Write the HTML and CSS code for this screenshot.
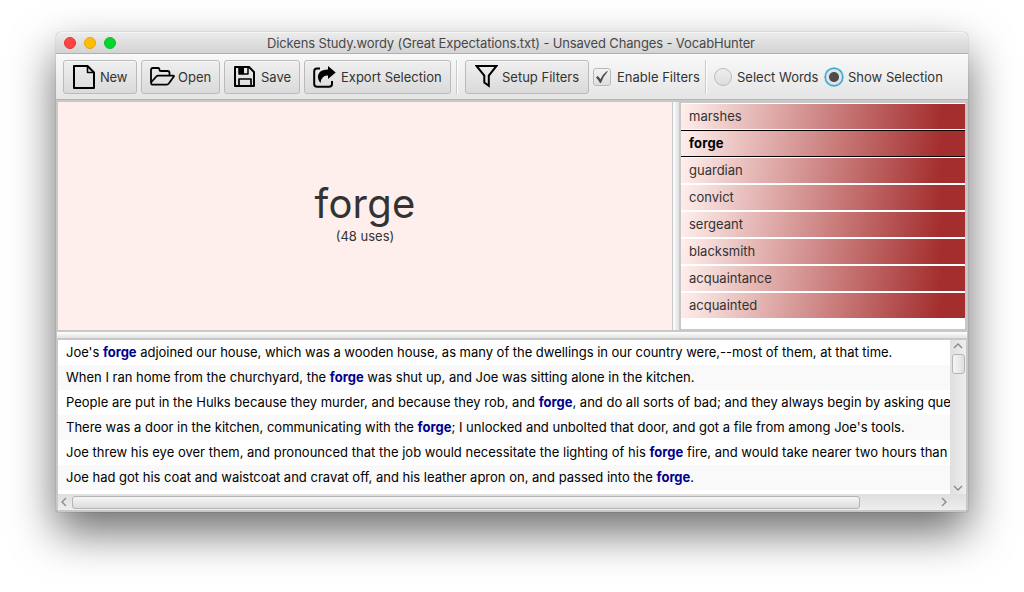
FILE: index.html
```html
<!DOCTYPE html>
<html lang="en">
<head>
<meta charset="utf-8">
<title>VocabHunter</title>
<link rel="stylesheet" href="styles.css">
</head>
<body>
<main class="window">
  <header class="titlebar">
    <div class="lights"><i class="light red"></i><i class="light amber"></i><i class="light green"></i></div>
    <h1 class="title">Dickens Study.wordy (Great Expectations.txt) - Unsaved Changes - VocabHunter</h1>
  </header>
  <nav class="toolbar">
    <button class="btn new"><svg class="icon" width="22" height="24" viewBox="0 0 22 24" fill="none" stroke="#000" stroke-width="2" stroke-linejoin="round"><path d="M1 1H14.5L21 7.5V23H1Z"/><path d="M14.5 1V7.5H21" stroke-width="1.6"/></svg><span class="label">New</span></button>
    <button class="btn open"><svg class="icon" width="25" height="19" viewBox="0 0 25 19" fill="none" stroke="#000" stroke-width="1.8" stroke-linejoin="round"><path d="M1 15.500V3Q1 1 3 1H8Q9.500 1 9.500 3Q9.500 4 11 4H17.500Q19.500 4 19.500 6V8.500"/><path d="M1 15.500L6.300 9.500Q7 8.600 8.500 8.600H23Q24.500 8.600 23.700 9.800L18.800 16.500Q17.800 17.700 16 17.700H2.500Q1 17.500 1 15.500Z"/></svg><span class="label">Open</span></button>
    <button class="btn save"><svg class="icon" width="21" height="21" viewBox="0 0 21 21" fill="none" stroke="#000" stroke-width="2" stroke-linejoin="round"><path d="M1 1H15L20 6V20H1Z"/><path d="M5 20V13H17V20" stroke-width="1.7"/><path d="M5 1V8H14V1" stroke-width="1.5"/><path d="M5 1H10V8H5Z" fill="#000" stroke="none"/></svg><span class="label">Save</span></button>
    <button class="btn export"><svg class="icon" width="23" height="22" viewBox="0 0 23 22"><path d="M7 2.500H4Q1.200 2.500 1.200 5.500V18Q1.200 20.800 4 20.800H16Q19 20.800 19 18V15" fill="none" stroke="#000" stroke-width="2"/><path d="M15 0L22.700 6.500L15 13V9.500Q8.500 9 7.500 17Q4.500 13.500 5 9.500Q6 3.500 15 3.500Z"/></svg><span class="label">Export Selection</span></button>
    <i class="sep sep-a"></i>
    <button class="btn setup"><svg class="icon" width="23" height="23" viewBox="0 0 23 23" fill="none" stroke="#000" stroke-width="2"><path d="M1.500 1H21.500L13.800 10.500V20.700L9.300 17.500V10.500Z"/></svg><span class="label">Setup Filters</span></button>
    <span class="check"><svg width="12" height="12" viewBox="0 0 12 12"><path d="M0 6.500L1.800 5L4.500 8.200Q7 3 11 0L11.800 .6Q7.500 5 5 12H4Q2.500 9 0 6.500Z" fill="#4a4a4a"/></svg></span>
    <span class="label enable">Enable Filters</span>
    <i class="sep sep-b"></i>
    <i class="radio"></i><span class="label words">Select Words</span>
    <i class="radio on"></i><span class="label show">Show Selection</span>
  </nav>
  <section class="upper">
    <div class="detail"><div class="word">forge</div><div class="uses">(48 uses)</div></div>
    <div class="vsplit"></div>
    <ul class="words-list">
      <li class="item">marshes</li>
      <li class="item current">forge</li>
      <li class="item">guardian</li>
      <li class="item">convict</li>
      <li class="item">sergeant</li>
      <li class="item">blacksmith</li>
      <li class="item">acquaintance</li>
      <li class="item">acquainted</li>
    </ul>
  </section>
  <div class="hsplit"></div>
  <section class="lower">
    <div class="lines">
      <p class="line l1">Joe's <b>forge</b> adjoined our house, which was a wooden house, as many of the dwellings in our country were,--most of them, at that time.</p>
      <p class="line">When I ran home from the churchyard, the <b>forge</b> was shut up, and Joe was sitting alone in the kitchen.</p>
      <p class="line l3">People are put in the Hulks because they murder, and because they rob, and <b>forge</b>, and do all sorts of bad; and they always begin by asking que</p>
      <p class="line">There was a door in the kitchen, communicating with the <b>forge</b>; I unlocked and unbolted that door, and got a file from among Joe's tools.</p>
      <p class="line l5">Joe threw his eye over them, and pronounced that the job would necessitate the lighting of his <b>forge</b> fire, and would take nearer two hours than</p>
      <p class="line">Joe had got his coat and waistcoat and cravat off, and his leather apron on, and passed into the <b>forge</b>.</p>
    </div>
    <div class="vbar">
      <svg width="10" height="6" viewBox="0 0 10 6"><path d="M1 5L5 1L9 5"/></svg>
      <i class="vthumb"></i>
      <svg class="down" width="10" height="6" viewBox="0 0 10 6"><path d="M1 1L5 5L9 1"/></svg>
    </div>
    <div class="hbar">
      <svg width="6" height="10" viewBox="0 0 6 10"><path d="M5 1L1 5L5 9"/></svg>
      <i class="hthumb"></i>
      <svg class="right" width="6" height="10" viewBox="0 0 6 10"><path d="M1 1L5 5L1 9"/></svg>
    </div>
  </section>
</main>
</body>
</html>
```
FILE: styles.css
```css
* { box-sizing: border-box; }
body { margin: 0; width: 1024px; height: 592px; overflow: hidden; background: #fff; padding: 32px 56px; font-family: Inter, "Liberation Sans", sans-serif; font-size: 13px; color: #333; }
.window { width: 912px; height: 480px; display: flex; flex-direction: column; background: #c8c8c8; border-radius: 5px 5px 2px 2px; box-shadow: 0 0 1px rgba(0,0,0,.5), 0 20px 45px rgba(0,0,0,.58); }
.titlebar { height: 22px; flex: none; display: grid; grid-template-columns: 211px 1fr; align-items: center; background: linear-gradient(#ebebeb, #d3d3d3); border-bottom: 1px solid #b0b0b0; border-top: 1px solid #f5f5f5; border-radius: 5px 5px 0 0; }
.lights { display: flex; gap: 8px; padding-left: 8px; }
.light { width: 12px; height: 12px; border-radius: 50%; }
.red { background: #ff4543; border: 1px solid #e9302f; }
.amber { background: #ffbe00; border: 1px solid #e3a51b; }
.green { background: #00d62b; border: 1px solid #0fbd30; }
.title { margin: 0; font-size: 13px; font-weight: 400; letter-spacing: -0.135px; color: #484848; white-space: nowrap; line-height: 16px; }
.toolbar { height: 46px; flex: none; display: flex; align-items: center; padding: 0 7px; background: linear-gradient(#f9f9f9, #e5e5e5); border-bottom: 1px solid #b4b4b4; }
.btn { height: 34px; flex: none; display: flex; align-items: center; margin: 0 4px 0 0; padding: 0 0 0 9px; border: 1px solid #bababa; border-radius: 3px; background: linear-gradient(#efefef, #dadada); box-shadow: inset 0 1px #f9f9f9; font: inherit; color: #333; }
.icon { flex: none; }
.label { flex: none; white-space: nowrap; line-height: 16px; }
.new { width: 74px; padding-left: 8.500px; } .new .label { margin-left: 5.500px; letter-spacing: -0.2px; }
.open { width: 79px; padding-left: 8px; } .open .label { margin-left: 3px; }
.save { width: 76px; } .save .label { margin-left: 6px; }
.export { width: 147px; padding-left: 8px; } .export .label { margin-left: 5px; }
.setup { width: 124px; } .setup .label { margin-left: 4px; }
.sep { flex: none; width: 2px; height: 34px; border-left: 1px solid #c9c9c9; border-right: 1px solid #fff; }
.sep-a { margin: 0 7px 0 1px; }
.check { flex: none; width: 18px; height: 18px; border: 1px solid #b9b9b9; border-radius: 3px; background: linear-gradient(#f3f3f3, #dedede); display: grid; place-items: center; }
.enable { width: 88px; margin-left: 6px; }
.sep-b { margin-right: 7px; }
.radio { flex: none; width: 18px; height: 18px; border: 1px solid #bbb; border-radius: 50%; background: linear-gradient(#eee, #ddd); }
.on { border: 1.500px solid #1b9fd1; background: radial-gradient(circle, #4c4c4c 4.500px, #e4e4e4 5.500px); box-shadow: 0 0 0 .5px #1b9fd1, 0 0 2px #5fc0e2; }
.words { width: 88px; margin-left: 5px; }
.show { margin-left: 5px; }
.upper { height: 228px; flex: none; margin: 2px 1px 0 2px; display: flex; }
.detail { width: 614px; background: #ffefec; display: flex; flex-direction: column; align-items: center; padding-top: 77px; }
.word { font-size: 40px; line-height: 50px; height: 50px; letter-spacing: .2px; }
.uses { line-height: 16px; margin-top: -1px; }
.vsplit { width: 9px; border-left: 1px solid #c8c8c8; border-right: 2px solid #c8c8c8; background: linear-gradient(90deg, #fff, #e0e0e0); }
.words-list { width: 284px; height: 226px; margin: 1px 0 0; padding: 0; list-style: none; background: #fff; }
.item { height: 27px; padding: 0 8px; line-height: 25px; border: solid #fff; border-width: 1px 0; background: linear-gradient(100deg, #ffefec, #a42e2e 91%) padding-box; }
.current { border-color: #000; font-weight: 700; letter-spacing: .2px; color: #000; }
.hsplit { height: 6px; flex: none; margin: 2px 1px; background: linear-gradient(#fff, #e2e2e2); }
.lower { height: 170px; flex: none; margin: 0 2px; display: grid; grid-template-columns: 892px 16px; grid-template-rows: 154px 16px; }
.lines { overflow: hidden; background: #fff; }
.line { margin: 0; height: 25px; padding-left: 8px; line-height: 24px; color: #000; white-space: nowrap; }
.line:nth-child(even) { background: #f9f9f9; }
.line b { color: #00008b; }
.l1 { letter-spacing: -0.025px; }
.l3 { letter-spacing: -0.006px; }
.l5 { letter-spacing: .012px; }
.vbar svg, .hbar svg { flex: none; fill: none; stroke: #888; stroke-width: 1.300px; }
.vbar { background: linear-gradient(90deg, #dfdfdf, #eee); display: flex; flex-direction: column; align-items: center; padding: 3px 0; }
.vthumb { width: 13px; height: 20px; margin-top: 5px; border: 1px solid #b4b4b4; border-radius: 3px; background: linear-gradient(90deg, #f5f5f5, #dfdfdf); }
.down { margin-top: auto; }
.hbar { grid-column: 1 / 3; background: linear-gradient(#dfdfdf, #eee); display: flex; align-items: center; padding: 0 19px 0 3px; }
.hthumb { width: 788px; height: 13px; margin-left: 5px; border: 1px solid #b4b4b4; border-radius: 3px; background: linear-gradient(#f5f5f5, #dcdcdc); }
.right { margin-left: auto; }
```
